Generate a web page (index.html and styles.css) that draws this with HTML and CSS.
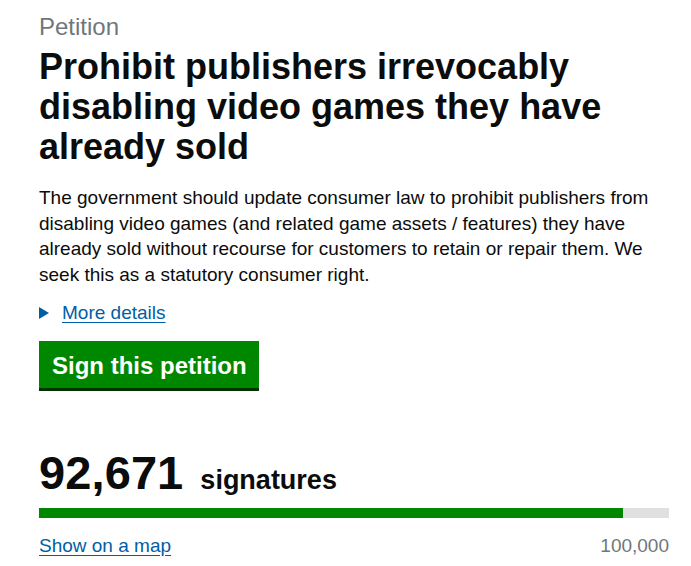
FILE: index.html
```html
<!DOCTYPE html>
<html lang="en">
<head>
<meta charset="utf-8">
<title>Petition</title>
<link rel="stylesheet" href="styles.css">
</head>
<body>
<main class="page">
  <p class="caption">Petition</p>
  <h1 class="title">Prohibit publishers irrevocably disabling video games they have already sold</h1>
  <p class="summary">The government should update consumer law to prohibit publishers from disabling video games (and related game assets / features) they have already sold without recourse for customers to retain or repair them. We seek this as a statutory consumer right.</p>
  <div class="details"><span class="arrow"></span><a href="#" class="link">More details</a></div>
  <a href="#" class="button">Sign this petition</a>
  <div class="count"><span class="number">92,671</span><span class="label">signatures</span></div>
  <div class="bar"><div class="fill" style="width: 92.671%"></div></div>
  <div class="foot"><a href="#" class="link">Show on a map</a><span class="target">100,000</span></div>
</main>
</body>
</html>
```
FILE: styles.css
```css
html, body { margin: 0; padding: 0; background: #fff; }
body { font-family: "Liberation Sans", Arial, sans-serif; color: #0b0c0c; }
.page { padding: 12px 22px 0 39px; width: 630px; }
.caption { margin: 0; font-size: 24px; line-height: 30px; color: #6f777b; }
.title { margin: 5px 0 0; font-size: 36px; line-height: 40px; font-weight: bold; }
.summary { margin: 18px 0 0; font-size: 19px; line-height: 25.6px; }
.details { margin-top: 13px; display: flex; align-items: center; font-size: 19px; line-height: 25px; }
.arrow { width: 0; height: 0; border-left: 10px solid #005ea5; border-top: 6px solid transparent; border-bottom: 6px solid transparent; margin-right: 13px; }
.link { color: #005ea5; text-decoration: underline; text-underline-offset: 3px; }
.button { display: block; width: max-content; margin-top: 16px; background: #008700; color: #fff; font-weight: bold; font-size: 24px; line-height: 28px; padding: 11px 12px 8px 13px; text-decoration: none; box-shadow: 0 3px 0 #003300; }
.count { margin-top: 61px; display: flex; align-items: baseline; }
.number { font-weight: bold; font-size: 47px; line-height: 48px; letter-spacing: 0.1px; }
.label { font-weight: bold; font-size: 27px; margin-left: 17px; }
.bar { margin-top: 11px; height: 10px; background: #e0e0e0; }
.fill { height: 100%; background: #008700; }
.foot { margin-top: 16px; display: flex; justify-content: space-between; font-size: 19px; line-height: 24px; }
.target { color: #6f777b; }
```
